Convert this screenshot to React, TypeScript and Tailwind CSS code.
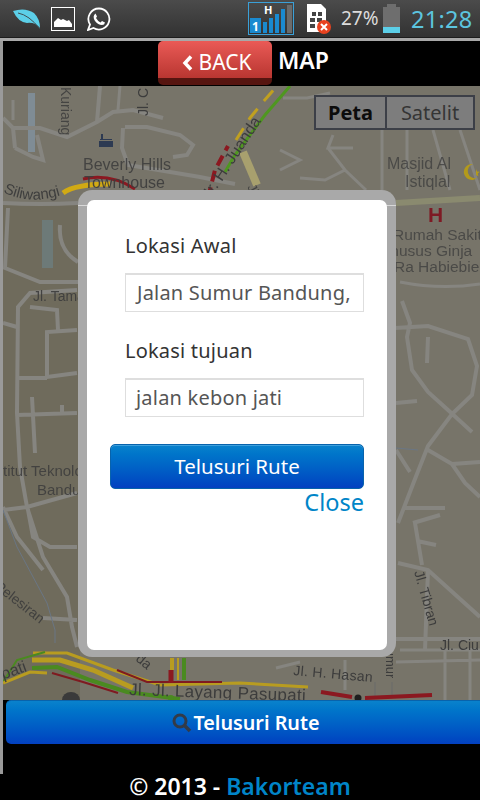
const font = { fontFamily: '"Noto Sans", "Open Sans", sans-serif' };

function MapCanvas() {
  const road = "fill-none stroke-[#868580] stroke-[4px]";
  const thin = "fill-none stroke-[#868580] stroke-[3px]";
  const water = "fill-none stroke-[#6a7684] stroke-[1px]";
  const label = "fill-[#3c3c3c]";
  return (
    <svg className="absolute inset-0 h-full w-full blur-[0.6px]" viewBox="3 86 477 614" style={{ fontFamily: '"Liberation Sans", sans-serif' }}>
      <rect x="3" y="86" width="477" height="614" fill="#777469" />
      <path d="M3 204 Q40 208 80 204 L80 700 L3 700 Z" fill="#6f6b5c" />
      <rect x="42" y="220" width="11" height="48" fill="#6d7a78" />
      <rect x="28" y="93" width="7" height="59" fill="#7f8c95" />

      {/* top-left streets */}
      <path className={road} d="M3 118 L13 128 L40 128 L67 137 L97 122 L113 112 L133 110 L163 118 M100 86 L97 122 M123 128 L122 148 L128 165 L200 177 L235 184 M125 127 L147 127 L180 135 L193 145 L187 155 L173 157 M15 148 L33 157 L43 160 L37 135 M13 128 L15 148" />
      <path className={thin} d="M120 86 L118 110 M13 100 L13 120" />
      <path className={road} d="M3 203 Q40 205 78 203 M8 208 L5 268 L40 282 L78 282 M60 225 Q58 250 78 262" />

      {/* left column streets */}
      <path className={road} d="M77 290 L30 293 L18 307 L17 413 L20 467 L27 507 L43 557 L67 597 L72 627 L77 647 M3 323 L17 327 M30 307 L57 310 L58 330 M77 330 L47 332 L47 377 L77 373 M17 378 L47 378 M17 415 L77 413 M32 397 L35 453 M62 405 L62 413 M3 510 L27 507 L77 493 M28 510 L33 537 L50 547 L77 547 M3 507 L17 537 L43 570 M43 618 L77 620" />
      <path className={water} d="M3 510 L17 547 L47 603 L55 630 L55 643" />

      {/* top centre / right streets */}
      <path className={thin} d="M283 98 L307 98 L330 93 M333 135 L328 148 L353 148 M280 150 L300 160 L280 170 M328 148 L345 170 L366 190 M300 178 L325 180 L345 170 M382 130 L382 190 M407 130 L407 190 M433 130 L450 190 M460 130 L480 190" />
      <path className="fill-none stroke-[#8a8a6f] stroke-[6px]" d="M396 203 L480 198" />
      <path className="fill-none stroke-[#868580] stroke-[3px]" d="M400 282 Q440 290 480 284" />

      {/* right column streets */}
      <path className={road} d="M395 328 L428 326 L468 339 L477 366 L472 395 L452 414 L428 446 L415 479 L398 523 M402 301 L410 323 L407 337 L412 370 L428 392 L448 410 L472 432 M428 337 L427 363 M396 403 L417 401 M428 450 L452 464 L465 483 L480 497 M452 464 L480 462 M396 450 L410 472 M405 508 L445 508 M413 523 L440 515 M417 541 L436 545 M415 523 L422 565 M398 563 L428 570 L480 617 M428 570 L425 650 M396 639 L480 639" />
      <path className={water} d="M396 448 L418 450" />

      {/* bottom right blocks */}
      <path className={thin} d="M396 662 L480 660 M445 648 L445 700 M470 648 L470 700 M276 668 L300 662 M345 660 L345 690 M400 650 L480 650" />
      <path className="fill-none stroke-[#6a6a6a] stroke-[1px]" d="M375 698 V682 M392 698 V682" />

      {/* Juanda traffic */}
      <path className="fill-none stroke-[#a8a06e] stroke-[8px]" d="M243 152 L257 185" />
      <path className="fill-none stroke-[#8b1820] stroke-[4px]" strokeDasharray="11 6" d="M208 198 L215 170 L228 146" />
      <path className="fill-none stroke-[#c0a020] stroke-[3px]" strokeDasharray="14 10" d="M236 140 L250 118 L263 102 L277 86" />
      <path className="fill-none stroke-[#4f9720] stroke-[3px]" d="M225 172 L235 155 L265 115 L290 86" />

      {/* Siliwangi traffic */}
      <path className="fill-none stroke-[#d1aa14] stroke-[5px]" d="M63 193 Q75 184 110 184" />
      <path className="fill-none stroke-[#8b1820] stroke-[3px]" d="M83 179 Q110 173 135 189" />

      {/* Pasupati */}
      <path className="fill-none stroke-[#b89c20] stroke-[3px]" d="M33 653 L67 653 L113 670 L160 685 L240 683 L308 687" />
      <path className="fill-none stroke-[#b89c20] stroke-[5px]" d="M32 660 L60 660 L93 670 L133 688" />
      <path className="fill-none stroke-[#4a8a20] stroke-[4px]" d="M32 668 L57 667 L90 680 L127 692 L180 699" />
      <path className="fill-none stroke-[#4a8a20] stroke-[2px]" d="M3 682 L17 660 L45 652" />
      <path className="fill-none stroke-[#b89c20] stroke-[3px]" d="M3 683 L30 672 L47 673" />
      <path className="fill-none stroke-[#7f1a20] stroke-[2px]" d="M52 673 L83 682 L118 693 M117 670 L147 682 L222 682" />
      <path className="fill-none stroke-[#b89c20] stroke-[4px]" d="M172 658 L172 670" />
      <path className="fill-none stroke-[#8b1820] stroke-[5px]" d="M171 670 L171 683" />
      <path className="fill-none stroke-[#4a8a20] stroke-[4px]" d="M184 658 L184 680" />
      <path className="fill-none stroke-[#b89c20] stroke-[2px]" d="M178 658 L178 680" />
      <path className="fill-none stroke-[#8b1820] stroke-[4px]" d="M321 692 L352 697 M365 698 L432 695" />
      <circle cx="358" cy="698" r="3.5" fill="#1e1e1e" />
      <circle cx="171" cy="698" r="3" fill="#4a8a20" />
      <path className="fill-[#3a3a3a]" d="M62 700 a9 8 0 0 1 18 0 Z" />

      {/* symbols on map */}
      <path className="fill-[#2d3a52]" d="M99 141 h14 v6 h-14 Z M100 139 h12 v1 h-12 Z M101 134 h2 v5 h-2 Z" />
      <text x="428" y="222" className="fill-[#7e1a24] text-[21px] font-bold">H</text>
      <path d="M473 164 A8 8 0 1 0 477 178 A6.5 6.5 0 1 1 473 164 Z M476 169 l1.2 2.5 l2.6 0.3 l-2 1.8 l0.6 2.6 l-2.4 -1.3 Z" fill="#b39a1b" />

      {/* labels */}
      <defs>
        <path id="siliwangi-path" d="M3 192 Q30 206 65 194" />
      </defs>
      <g className={label} fontSize="14">
        <text x="83" y="170" fontSize="16" opacity="0.85">Beverly Hills</text>
        <text x="84" y="188" fontSize="16" opacity="0.9">Townhouse</text>
        <text fontSize="15" opacity="0.95"><textPath href="#siliwangi-path">Siliwangi</textPath></text>
        <text x="61" y="87" transform="rotate(90 61 87)" fontSize="14" opacity="0.85">Kuriang</text>
        <text x="148" y="116" transform="rotate(-90 148 116)" fontSize="14">Jl. C</text>
        <text x="33" y="301" fontSize="14" opacity="0.9">Jl. Tamansari</text>
        <text x="-17" y="476" fontSize="15" opacity="0.85">Institut Teknologi</text>
        <text x="37" y="495" fontSize="15" opacity="0.85">Bandung</text>
        <text x="-6" y="588" transform="rotate(38 -6 588)" fontSize="14" opacity="0.9">Pelesiran</text>
        <text x="-31" y="692" transform="rotate(-20 -31 692)" fontSize="16">Pasupati</text>
        <text x="212" y="197" transform="rotate(-57 212 197)" fontSize="16">Ir. H. Juanda</text>
        <text x="247" y="187" transform="rotate(62 247 187)" fontSize="13" opacity="0.85">Jl. J</text>
        <text x="387" y="169" fontSize="16" opacity="0.75">Masjid Al</text>
        <text x="405" y="187" fontSize="16" opacity="0.75">Istiqlal</text>
        <text x="393" y="240" fontSize="15.5" opacity="0.75">Rumah Sakit</text>
        <text x="380" y="256" fontSize="15.5" opacity="0.75">Khusus Ginja</text>
        <text x="394" y="272" fontSize="15.5" opacity="0.75">Ra Habiebie</text>
        <text x="414" y="572" transform="rotate(74 414 572)" fontSize="14">Jl. Tibran</text>
        <text x="440" y="650" fontSize="14">Jl. Ciu</text>
        <text x="293" y="675" transform="rotate(5 293 675)" fontSize="14" letterSpacing="0.3">Jl. H. Hasan</text>
        <text x="129" y="695" transform="rotate(2 129 695)" fontSize="17" letterSpacing="0.3">Jl. Jl. Layang Pasupati</text>
        <text x="386" y="640" transform="rotate(90 386 640)" fontSize="13">Sumur</text>
        <text x="135" y="660" transform="rotate(40 135 660)" fontSize="14">da</text>
      </g>
    </svg>
  );
}

function StatusBar() {
  return (
    <div className="flex h-[37px] items-center bg-gradient-to-b from-[#4b4b4b] to-[#323232]">
      <svg className="ml-[13px] h-[22px] w-[28px]" viewBox="0 0 28 22">
        <path d="M0 3 Q12 -1 21 5 Q27 11 27 20 Q22 14 14 15 Q5 14 0 3 Z" fill="#5ccfe8" />
        <path d="M5 5 Q16 7 27 21" stroke="#3f4d52" strokeWidth="1" fill="none" />
      </svg>
      <svg className="ml-[10px] h-[24px] w-[24px]" viewBox="0 0 24 24">
        <rect x="0.5" y="0.5" width="23" height="23" fill="#3c3c3c" stroke="#fff" strokeWidth="1" />
        <path d="M3 20 V15 L7 11 L10 13 L12 12 L16 14 L18 13 L21 17 V20 Z" fill="#fff" />
      </svg>
      <svg className="ml-[12px] h-[24px] w-[24px]" viewBox="0 0 24 24">
        <path d="M12 1.5 A10.5 10.5 0 1 1 6.5 21 L1 23 L3 17.5 A10.5 10.5 0 0 1 12 1.5 Z" fill="none" stroke="#fff" strokeWidth="1.8" />
        <path d="M8.5 6.5 L10 9.5 L9 11 Q11 14.5 13.5 15.5 L15 14 L18 15.5 Q17.5 18 15 18 Q11 18 8 14 Q5 9 8.5 6.5 Z" fill="#fff" />
      </svg>
      <div className="relative ml-[137px] flex h-[33px] w-[46px] items-end gap-[2px] border border-[#3aa0d8] pr-[1px] pb-[1px] pl-[1px]">
        <span className="absolute top-[1px] left-[15px] text-[11px] leading-none font-bold text-white" style={font}>H</span>
        <div className="flex h-[15px] w-[11px] items-end justify-center bg-[#1a8ad0] text-[12px] leading-none font-bold text-white" style={font}>1</div>
        <div className="h-[11px] w-[4px] bg-[#1a8ad0]" />
        <div className="h-[15px] w-[4px] bg-[#1a8ad0]" />
        <div className="h-[19px] w-[4px] bg-[#1a8ad0]" />
        <div className="h-[24px] w-[4px] bg-[#1a8ad0]" />
        <div className="h-[28px] w-[5px] bg-[#6b6b6b]" />
      </div>
      <svg className="ml-[13px] h-[30px] w-[24px]" viewBox="0 0 24 30">
        <path d="M0 0 H14 L19 5 V28 H0 Z" fill="#fff" />
        <path d="M5 8 h4 v4 h-4 Z M11 8 h4 v4 h-4 Z M3 14 h5 v4 h-5 Z M10 14 h5 v4 h-5 Z M3 20 h5 v4 h-5 Z" fill="#444" />
        <circle cx="17" cy="23" r="7" fill="#e8421f" />
        <path d="M14 20 L20 26 M20 20 L14 26" stroke="#fff" strokeWidth="2" />
      </svg>
      <span className="ml-[10px] w-[36px] text-[19px] leading-none text-[#dcdcdc]" style={font}>27%</span>
      <div className="ml-[6px] flex h-[29px] w-[17px] flex-col items-center">
        <div className="h-[3px] w-[9px] bg-[#6e6e6e]" />
        <div className="h-[20px] w-full bg-[#6e6e6e]" />
        <div className="h-[6px] w-full bg-[#5ccfe8]" />
      </div>
      <span className="ml-[11px] pt-[2px] text-[23.5px] leading-none tracking-[0.3px] text-[#5cc4df]" style={font}>21:28</span>
    </div>
  );
}

function Header() {
  return (
    <div className="flex h-[45px] items-start bg-black">
      <div className="ml-[155px] flex h-[44px] w-[114px] items-center justify-center rounded-[5px] border-b-[7px] border-[#561510] bg-gradient-to-b from-[#ea5a56] to-[#b93631] pt-[6px] pl-[3px] text-[21px] leading-none text-white" style={font}>
        <svg className="mr-[6px] h-[16px] w-[11px]" viewBox="0 0 11 16">
          <path d="M9 1.5 L3 8 L9 14.5" fill="none" stroke="#fff" strokeWidth="3.5" />
        </svg>
        BACK
      </div>
      <span className="ml-[6px] pt-[4px] text-[23px] leading-[30px] font-semibold text-white" style={font}>MAP</span>
    </div>
  );
}

function Dialog() {
  const field = "mt-[14px] ml-[15px] flex h-[39px] items-center overflow-hidden border border-t-2 border-[#dedede] text-[20px] tracking-[0.2px] whitespace-nowrap text-[#555]";
  const caption = "pl-[15px] text-[20px] leading-[26px] tracking-[0.2px] text-[#333]";
  return (
    <div className="absolute top-[104px] left-[75px] h-[467px] w-[318px] rounded-[14px] bg-[#a9a9a9] px-[9px] pt-[10px] pb-[7px]" style={font}>
      <div className="absolute top-[15px] left-0 h-px w-full bg-[#d8d8d8]" />
      <div className="relative flex h-full flex-col rounded-[7px] bg-white px-[23px] pt-[33px]">
        <label className={caption}>Lokasi Awal</label>
        <div className={`${field} pl-[11px]`}>Jalan Sumur Bandung,</div>
        <label className={`${caption} mt-[26px]`}>Lokasi tujuan</label>
        <div className={`${field} pl-[10px]`}>jalan kebon jati</div>
        <button className="mt-[27px] h-[45px] rounded-[5px] border border-[#0863ac] bg-gradient-to-b from-[#0a82cc] to-[#0440c0] text-[20.5px] text-white shadow-[inset_0_1px_0_#3ea0dd]">
          Telusuri Rute
        </button>
        <a className="self-end text-[23.5px] leading-[27px] text-[#0085c8]">Close</a>
      </div>
    </div>
  );
}

export default function App() {
  return (
    <div className="flex h-[800px] w-[480px] flex-col overflow-hidden bg-black" style={font}>
      <StatusBar />
      <div className="h-px bg-[#1c1c1c]" />
      <div className="h-[3px] bg-[#a8a8a8]" />
      <div className="flex min-h-0 flex-1">
        <div className="flex w-[3px] flex-col">
          <div className="h-[733px] bg-[#9a9a9a]" />
        </div>
        <div className="flex min-w-0 flex-1 flex-col">
          <Header />
          <div className="relative h-[614px] shrink-0 overflow-hidden bg-[#777469]">
            <MapCanvas />
            <div className="absolute top-[9px] right-[5px] flex h-[35px] w-[161px] border-2 border-[#3c3f47] bg-[#7d7d7d] text-[20px] leading-none">
              <div className="flex w-[71px] items-center justify-center border-r-2 border-[#3c3f47] font-bold text-[#0c0c0c]">Peta</div>
              <div className="flex flex-1 items-center justify-center text-[#353535]">Satelit</div>
            </div>
            <Dialog />
          </div>
          <button className="ml-[3px] flex h-[44px] shrink-0 items-center justify-center rounded-l-[5px] border-t border-[#0863ac] bg-gradient-to-b from-[#0a82cc] to-[#0440c0] pl-[6px] text-[19.75px] font-semibold text-white">
            <svg className="mr-px h-[20px] w-[20px]" viewBox="0 0 20 20">
              <circle cx="8" cy="8" r="6" fill="none" stroke="#333b48" strokeWidth="3" />
              <path d="M12.5 12.5 L18 18" stroke="#333b48" strokeWidth="3.5" />
            </svg>
            Telusuri Rute
          </button>
          <div className="flex flex-1 items-end justify-center pr-[3px] text-[23px] leading-[27px] font-semibold text-white">
            <span>© 2013 - <span className="text-[#0085c8]">Bakorteam</span></span>
          </div>
        </div>
      </div>
    </div>
  );
}
